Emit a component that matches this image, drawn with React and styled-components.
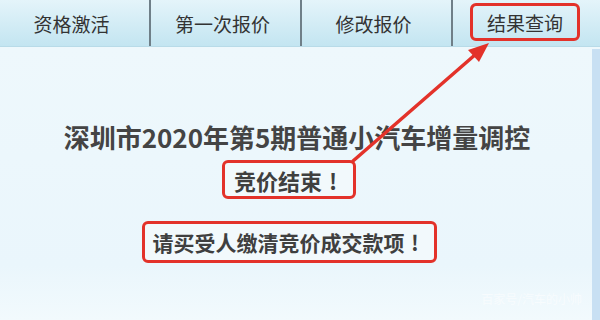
import styled, { createGlobalStyle } from "styled-components";

const GlobalStyle = createGlobalStyle`
  html, body {
    margin: 0;
    padding: 0;
    width: 600px;
    height: 320px;
    overflow: hidden;
  }
  body {
    font-family: "Noto Sans CJK SC", "Noto Sans", sans-serif;
    background: #eef8fc;
  }
`;

const tabs = ["资格激活", "第一次报价", "修改报价", "结果查询"];

function App() {
  return (
    <>
      <GlobalStyle />
      <Page>
        <TabBar>
          {tabs.map((t, i) => (
            <Tab key={t} last={i === tabs.length - 1}>
              <TabLabel marked={i === tabs.length - 1}>{t}</TabLabel>
            </Tab>
          ))}
        </TabBar>
        <Body>
          <Content>
            <Title>深圳市2020年第5期普通小汽车增量调控</Title>
            <Notice size={22} pad={9} height={39}>
              竞价结束<Bang>!</Bang>
            </Notice>
            <Notice size={21} pad={8} height={42} top={22}>
              请买受人缴清竞价成交款项<Bang>!</Bang>
            </Notice>
          </Content>
          <SideStrip />
          <Watermark>百家号/汽车的小帅</Watermark>
        </Body>
        <Arrow viewBox="0 0 600 320" width="600" height="320">
          <line
            x1="353"
            y1="161"
            x2="476"
            y2="54"
            stroke="#e3322a"
            strokeWidth="3.5"
            strokeLinecap="round"
          />
          <polygon points="489,43 468,50 479,62" fill="#e3322a" />
        </Arrow>
      </Page>
    </>
  );
}

const Page = styled.div`
  position: relative;
  width: 600px;
  height: 320px;
  display: flex;
  flex-direction: column;
  background: #eef8fc;
`;

const TabBar = styled.div`
  display: flex;
  height: 46px;
  background: linear-gradient(#e4f4fa, #c3e5f1);
  border-bottom: 1px solid #b8dbe8;
`;

const Tab = styled.div`
  flex: 0 0 ${(p) => (p.last ? "150px" : "151px")};
  display: flex;
  align-items: center;
  justify-content: center;
  border-right: ${(p) => (p.last ? "none" : "2px solid #6f7f88")};
  box-sizing: border-box;
`;

const TabLabel = styled.span`
  font-size: 19px;
  color: #333;
  border: ${(p) => (p.marked ? "3px solid #e3322a" : "none")};
  border-radius: 6px;
  width: ${(p) => (p.marked ? "110px" : "auto")};
  height: ${(p) => (p.marked ? "38px" : "auto")};
  box-sizing: border-box;
  display: flex;
  align-items: center;
  justify-content: center;
  margin-left: ${(p) => (p.marked ? "-6px" : "-6px")};
  margin-top: ${(p) => (p.marked ? "-2px" : "0")};
`;

const Body = styled.div`
  flex: 1;
  display: flex;
  position: relative;
  background: linear-gradient(#eef8fc, #eaf6fc 80%, #f2fafd);
`;

const Content = styled.div`
  flex: 1;
  display: flex;
  flex-direction: column;
  align-items: center;
  padding-top: 75px;
`;

const SideStrip = styled.div`
  width: 8px;
  margin-top: 2px;
  background: #c8e0f3;
`;

const Title = styled.div`
  font-size: 26px;
  line-height: 30px;
  font-weight: 700;
  color: #444;
  margin-left: 2px;
`;

const Notice = styled.div`
  margin-top: ${(p) => p.top ?? 8}px;
  margin-right: 14px;
  height: ${(p) => p.height}px;
  padding: 0 ${(p) => p.pad}px;
  box-sizing: border-box;
  display: flex;
  align-items: center;
  border: 3px solid #e3322a;
  border-radius: 6px;
  background: #f2f9fc;
  font-size: ${(p) => p.size}px;
  font-weight: 700;
  color: #3f3f3f;
`;

const Bang = styled.span`
  display: inline-block;
  width: 1em;
  text-align: center;
`;

const Watermark = styled.div`
  position: absolute;
  right: 18px;
  bottom: 13px;
  font-size: 12px;
  color: #ffffff;
  opacity: 0.55;
`;

const Arrow = styled.svg`
  position: absolute;
  left: 0;
  top: 0;
  pointer-events: none;
`;

export default App;
